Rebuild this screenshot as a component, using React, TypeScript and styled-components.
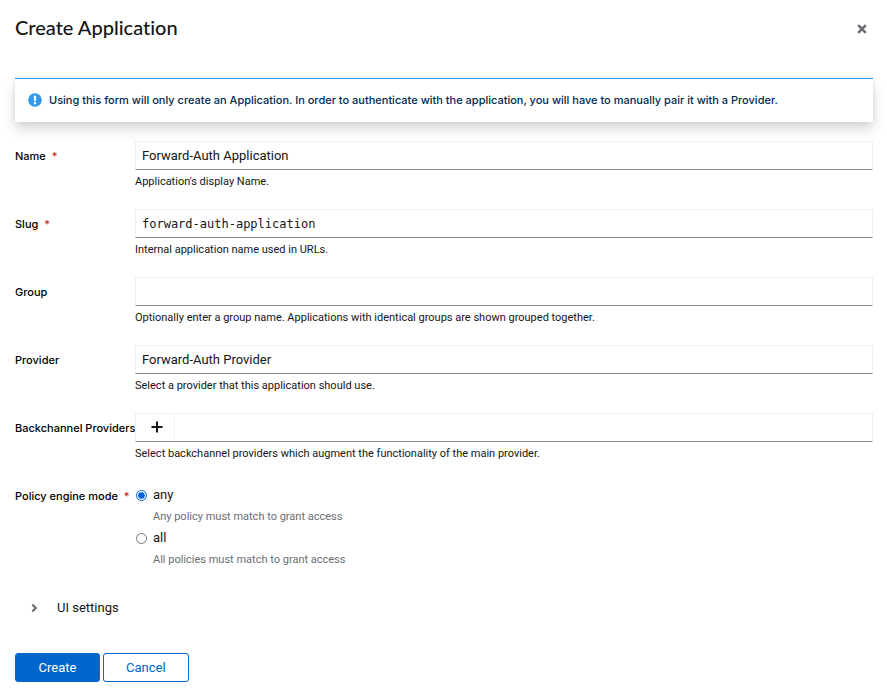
import React, { useState } from "react";
import type { ReactNode } from "react";
import styled, { createGlobalStyle, css } from "styled-components";

const textFont = `Roboto, "Liberation Sans", sans-serif`;
const strongFont = `Inter, "Liberation Sans", sans-serif`;
const titleFont = `Lato, "Liberation Sans", sans-serif`;
const monoFont = `"DejaVu Sans Mono", "Liberation Mono", monospace`;

const GlobalStyle = createGlobalStyle`
  *, *::before, *::after { box-sizing: border-box; }
  body {
    margin: 0;
    background: #fff;
    color: #151515;
    font-family: ${textFont};
    font-size: 13px;
    line-height: 20px;
  }
  button, input { font: inherit; color: inherit; }
`;

const Dialog = styled.main`
  padding: 14px 14px 12px 15px;
`;

const Header = styled.header`
  display: flex;
  align-items: flex-start;
  justify-content: space-between;
  min-height: 28px;
  margin-bottom: 36px;
`;

const Title = styled.h1`
  margin: 0;
  font-family: ${titleFont};
  font-size: 20px;
  font-weight: 500;
  font-variant-ligatures: none;
  line-height: 26px;
`;

const CloseButton = styled.button`
  display: flex;
  align-items: center;
  justify-content: center;
  width: 22px;
  height: 28px;
  padding: 2px 0 0;
  border: 0;
  background: none;
  color: #6a6e73;
  cursor: pointer;
`;

const Alert = styled.div`
  display: flex;
  align-items: center;
  gap: 7px;
  min-height: 44px;
  margin-bottom: 19px;
  padding: 0 13px 1px;
  border-top: 1px solid #2b9af3;
  background: #fff;
  box-shadow: 0 7px 14px rgba(3, 3, 3, 0.16), 0 0 5px rgba(3, 3, 3, 0.08);
`;

const AlertTitle = styled.p`
  margin: 0;
  color: #002952;
  font-family: ${strongFont};
  font-size: 11px;
  font-weight: 500;
  line-height: 16px;
`;

const Form = styled.form`
  display: flex;
  flex-direction: column;
`;

const FieldRow = styled.div`
  display: grid;
  grid-template-columns: 120px minmax(0, 1fr);
  min-height: 68px;
`;

const labelText = css`
  padding: 7px 0 0;
  font-family: ${strongFont};
  font-size: 11px;
  font-weight: 500;
  line-height: 16px;
  white-space: nowrap;
  color: #000;
`;

const Label = styled.label`
  ${labelText}
`;

const GroupLabel = styled.span`
  ${labelText}
`;

const Required = styled.span`
  margin-left: 3px;
  color: #c9190b;
`;

const Helper = styled.p`
  margin: 4px 0 0;
  font-size: 11px;
  line-height: 16px;
`;

const controlFrame = css`
  width: 100%;
  height: 29px;
  border: 1px solid #f0f0f0;
  border-bottom-color: #8a8d90;
  border-radius: 0;
  background: #fff;
`;

const TextInput = styled.input<{ $mono?: boolean }>`
  ${controlFrame}
  display: block;
  padding: 0 6px;
  outline: none;
  ${(p) => p.$mono && css`
    font-family: ${monoFont};
    font-size: 12px;
  `}
`;

const ChipInput = styled.div`
  ${controlFrame}
  display: flex;
`;

const AddButton = styled.button`
  display: flex;
  align-items: center;
  justify-content: center;
  width: 39px;
  padding: 0 0 1px 3px;
  border: 0;
  border-right: 1px solid #f0f0f0;
  background: none;
  cursor: pointer;
`;

const RadioGroup = styled.div`
  display: flex;
  flex-direction: column;
  gap: 1px;
  padding-top: 4px;
`;

const RadioOption = styled.div`
  display: grid;
  grid-template-columns: 18px 1fr;
  align-items: center;
`;

const Radio = styled.input`
  width: 11px;
  height: 11px;
  margin: 0 1px;
  accent-color: #0060df;
`;

const RadioHint = styled.span`
  grid-column: 2;
  padding: 4px 0 2px;
  color: #6a6e73;
  font-size: 11px;
  line-height: 16px;
`;

const Toggle = styled.button`
  display: flex;
  align-items: center;
  align-self: flex-start;
  gap: 18px;
  margin: 28px 0 35px 15px;
  padding: 0;
  border: 0;
  background: none;
  line-height: 20px;
  cursor: pointer;
`;

const Actions = styled.footer`
  display: flex;
  gap: 3px;
`;

const Button = styled.button<{ $primary?: boolean }>`
  height: 29px;
  min-width: 85px;
  padding: 0 22px;
  border: 1px solid #06c;
  border-radius: 3px;
  background: ${(p) => (p.$primary ? "#06c" : "#fff")};
  color: ${(p) => (p.$primary ? "#fff" : "#06c")};
  cursor: pointer;
`;

function CloseIcon() {
  return (
    <svg width="10" height="10" viewBox="0 0 10 10" aria-hidden="true">
      <path d="M1.2 1.2 8.8 8.8M8.8 1.2 1.2 8.8" stroke="currentColor" strokeWidth="2.6" />
    </svg>
  );
}

function InfoIcon() {
  return (
    <svg width="14" height="14" viewBox="0 0 14 14" aria-hidden="true">
      <circle cx="7" cy="7" r="6.8" fill="#2b9af3" />
      <path d="M5.7 2.8h2.6L7.9 8H6.1z" fill="#fff" />
      <circle cx="7" cy="10.1" r="1.3" fill="#fff" />
    </svg>
  );
}

function PlusIcon() {
  return (
    <svg width="12" height="12" viewBox="0 0 12 12" aria-hidden="true">
      <path d="M6 .5v11M.5 6h11" stroke="currentColor" strokeWidth="2" />
    </svg>
  );
}

function ChevronIcon() {
  return (
    <svg width="9" height="10" viewBox="0 0 9 10" aria-hidden="true">
      <path d="M2.3 1.5 5.8 5 2.3 8.5" fill="none" stroke="#6a6e73" strokeWidth="2.2" />
    </svg>
  );
}

interface FieldProps {
  id: string;
  label: string;
  helper: string;
  required?: boolean;
  children: ReactNode;
}

function Field({ id, label, helper, required, children }: FieldProps) {
  return (
    <FieldRow>
      <Label htmlFor={id}>
        {label}
        {required && <Required aria-hidden="true"> *</Required>}
      </Label>
      <div>
        {children}
        <Helper id={`${id}-help`}>{helper}</Helper>
      </div>
    </FieldRow>
  );
}

const policyModes = [
  { value: "any", hint: "Any policy must match to grant access" },
  { value: "all", hint: "All policies must match to grant access" },
];

export default function App() {
  const [mode, setMode] = useState("any");
  return (
    <>
      <GlobalStyle />
      <Dialog>
        <Header>
          <Title>Create Application</Title>
          <CloseButton type="button" aria-label="Close">
            <CloseIcon />
          </CloseButton>
        </Header>
        <Alert>
          <InfoIcon />
          <AlertTitle>
            Using this form will only create an Application. In order to authenticate with the
            application, you will have to manually pair it with a Provider.
          </AlertTitle>
        </Alert>
        <Form onSubmit={(e) => e.preventDefault()}>
          <Field id="name" label="Name" required helper="Application's display Name.">
            <TextInput id="name" required defaultValue="Forward-Auth Application" />
          </Field>
          <Field id="slug" label="Slug" required helper="Internal application name used in URLs.">
            <TextInput id="slug" required $mono spellCheck={false} defaultValue="forward-auth-application" />
          </Field>
          <Field
            id="group"
            label="Group"
            helper="Optionally enter a group name. Applications with identical groups are shown grouped together."
          >
            <TextInput id="group" />
          </Field>
          <Field id="provider" label="Provider" helper="Select a provider that this application should use.">
            <TextInput id="provider" defaultValue="Forward-Auth Provider" />
          </Field>
          <Field
            id="backchannel"
            label="Backchannel Providers"
            helper="Select backchannel providers which augment the functionality of the main provider."
          >
            <ChipInput>
              <AddButton id="backchannel" type="button">
                <PlusIcon />
              </AddButton>
            </ChipInput>
          </Field>
          <FieldRow role="radiogroup" aria-labelledby="mode-label">
            <GroupLabel id="mode-label">
              Policy engine mode
              <Required aria-hidden="true"> *</Required>
            </GroupLabel>
            <RadioGroup>
              {policyModes.map(({ value, hint }) => (
                <RadioOption key={value}>
                  <Radio
                    type="radio"
                    name="mode"
                    id={`mode-${value}`}
                    value={value}
                    checked={mode === value}
                    onChange={() => setMode(value)}
                  />
                  <label htmlFor={`mode-${value}`}>{value}</label>
                  <RadioHint>{hint}</RadioHint>
                </RadioOption>
              ))}
            </RadioGroup>
          </FieldRow>
          <Toggle type="button" aria-expanded="false">
            <ChevronIcon />
            UI settings
          </Toggle>
          <Actions>
            <Button type="submit" $primary>Create</Button>
            <Button type="button">Cancel</Button>
          </Actions>
        </Form>
      </Dialog>
    </>
  );
}
